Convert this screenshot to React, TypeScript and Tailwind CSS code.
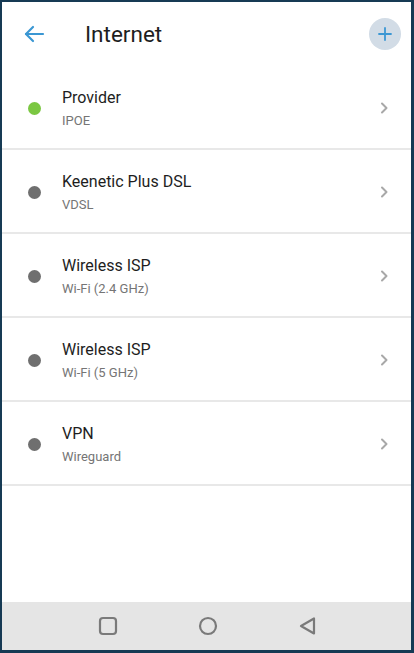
import React from "react";

const items = [
  { title: "Provider", sub: "IPOE", on: true },
  { title: "Keenetic Plus DSL", sub: "VDSL", on: false },
  { title: "Wireless ISP", sub: "Wi-Fi (2.4 GHz)", on: false },
  { title: "Wireless ISP", sub: "Wi-Fi (5 GHz)", on: false },
  { title: "VPN", sub: "Wireguard", on: false },
];

export default function App() {
  return (
    <div
      className="w-[414px] h-[653px] bg-[#163a54] pl-[2px] pt-[2px] pr-[3px] pb-[3px] overflow-hidden"
      style={{ fontFamily: "Roboto, 'Noto Sans', sans-serif" }}
    >
      <div className="w-full h-full bg-white flex flex-col">
        <div className="h-[64px] flex items-center shrink-0">
          <div className="w-[60px] flex items-center pl-[20px]">
            <svg width="24" height="24" viewBox="0 0 24 24" fill="none" stroke="#3b97d3" strokeWidth="2.2" strokeLinecap="round" strokeLinejoin="round">
              <path d="M21 12H4" />
              <path d="M11 5l-7 7 7 7" />
            </svg>
          </div>
          <div className="ml-[23px] text-[22.5px] text-[#1e1e1e] leading-none">Internet</div>
          <div className="ml-auto mr-[10px] w-[32px] h-[32px] rounded-full bg-[#d2dce6] flex items-center justify-center">
            <svg width="14" height="14" viewBox="0 0 14 14" fill="none" stroke="#3b97d3" strokeWidth="1.8" strokeLinecap="round">
              <path d="M7 1v12M1 7h12" />
            </svg>
          </div>
        </div>
        <div className="flex flex-col">
          {items.map((it, i) => (
            <div key={i} className="h-[84px] flex items-center border-b-[2px] border-[#e8e8e8]">
              <div className="w-[60px] flex justify-center pl-[4px] pt-[2px]">
                <div className={`w-[13px] h-[13px] rounded-full ${it.on ? "bg-[#7bc742]" : "bg-[#6f6f6f]"}`} />
              </div>
              <div className="flex flex-col pt-[2px]">
                <div className="text-[16px] leading-[20px] text-[#1e1e1e]">{it.title}</div>
                <div className="text-[13px] leading-[16px] mt-[5px] text-[#757575]">{it.sub}</div>
              </div>
              <div className="ml-auto mr-[22px] pt-[2px]">
                <svg width="10" height="14" viewBox="0 0 10 14" fill="none" stroke="#a8a8a8" strokeWidth="2" strokeLinecap="round" strokeLinejoin="round">
                  <path d="M3 2.5l4.5 4.5L3 11.5" />
                </svg>
              </div>
            </div>
          ))}
        </div>
        <div className="flex-1" />
        <div className="h-[48px] bg-[#e5e5e5] flex items-center justify-center gap-[80px] shrink-0 pl-[3px]">
          <svg width="20" height="20" viewBox="0 0 20 20" fill="none" stroke="#7a7a7a" strokeWidth="2.2">
            <rect x="2" y="2" width="16" height="16" rx="3" />
          </svg>
          <svg width="20" height="20" viewBox="0 0 20 20" fill="none" stroke="#7a7a7a" strokeWidth="2.2">
            <circle cx="10" cy="10" r="8" />
          </svg>
          <svg width="20" height="20" viewBox="0 0 20 20" fill="none" stroke="#7a7a7a" strokeWidth="2.2" strokeLinejoin="round">
            <path d="M16 2.5v15L3 10z" />
          </svg>
        </div>
      </div>
    </div>
  );
}
